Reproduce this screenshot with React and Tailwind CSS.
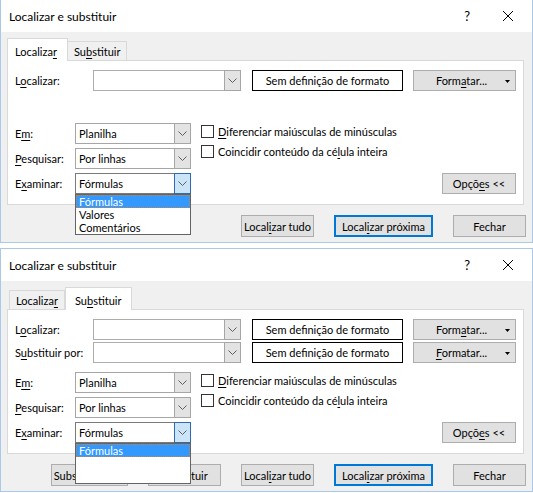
const ui = "font-['Lato',sans-serif] text-[11px] leading-[13px] text-black";

const U = ({ children }) => <span className="underline underline-offset-[2px]">{children}</span>;

const Chevron = () => (
  <svg width="9" height="5" viewBox="0 0 9 5" className="block">
    <polyline points="0.5,0.5 4.5,4.5 8.5,0.5" fill="none" stroke="#606060" strokeWidth="1" />
  </svg>
);

function Combo({ width, value, open, items, blankList, editable }) {
  return (
    <div className={`relative flex h-[21px] ${width} shrink-0`}>
      <div
        className={`flex flex-1 items-center border border-r-0 bg-white pl-[3px] ${
          open ? "border-[#7a7a7a]" : editable ? "border-[#adadad]" : "border-[#a6a6a6]"
        }`}
      >
        {value}
      </div>
      <div
        className={`flex w-[17px] items-center justify-center border ${
          open ? "border-[#2e6bb0] bg-[#cce4f7]" : "border-[#a6a6a6] bg-[#e3e3e3]"
        }`}
      >
        <Chevron />
      </div>
      {open && (
        <div className="absolute left-0 top-full z-20 flex h-[41px] w-full flex-col border border-[#646464] bg-white leading-[12px]">
          <div className="flex h-[13px] items-center border border-dotted border-[#c9843f] bg-[#3399ff] pl-[2px] text-white">
            {items[0]}
          </div>
          {!blankList &&
            items.slice(1).map((it) => (
              <div key={it} className="flex h-[13px] items-center pl-[3px]">
                {it}
              </div>
            ))}
        </div>
      )}
    </div>
  );
}

function Button({ width, children, primary }) {
  return (
    <div
      className={`flex h-[22px] ${width} shrink-0 items-center justify-center ${
        primary ? "border-2 border-[#0078d7]" : "border border-[#adadad]"
      } bg-[#e1e1e1]`}
    >
      <span className="whitespace-nowrap">{children}</span>
    </div>
  );
}

function FormatBox() {
  return (
    <div className="flex h-[21px] w-[151px] shrink-0 items-center justify-center border border-black bg-white">
      <span className="whitespace-nowrap">Sem definição de formato</span>
    </div>
  );
}

function FormatButton({ children }) {
  return (
    <div className="relative flex h-[21px] w-[103px] shrink-0 items-center justify-center border border-[#adadad] bg-[#e1e1e1] pr-[6px]">
      <span className="whitespace-nowrap">{children}</span>
      <svg width="5" height="3" viewBox="0 0 5 3" className="absolute right-[5px] top-[9px]">
        <polygon points="0,0 5,0 2.5,3" fill="#000" />
      </svg>
    </div>
  );
}

function Checkbox({ children }) {
  return (
    <div className="flex h-[13px] items-center">
      <div className="h-[13px] w-[13px] shrink-0 border border-[#333333] bg-white" />
      <span className="ml-[4px] whitespace-nowrap">{children}</span>
    </div>
  );
}

function Label({ width, children }) {
  return <span className={`${width} shrink-0 whitespace-nowrap`}>{children}</span>;
}

function Dialog({ replace }) {
  return (
    <div
      className={`flex w-[533px] flex-col border-x border-b border-[#a9c8ea] ${
        replace ? "mt-[5px] border-t" : ""
      }`}
    >
      {/* title bar */}
      <div className="flex h-[32px] items-center bg-white pl-[8px] text-[12px]">
        <span className="flex-1">Localizar e substituir</span>
        <span className="mr-[32px] text-[13px]">?</span>
        <svg width="12" height="12" viewBox="0 0 12 12" className="mr-[18px]">
          <path d="M1 1 L11 11 M11 1 L1 11" stroke="#000" strokeWidth="1" />
        </svg>
      </div>

      {/* body */}
      <div className="flex h-[210px] flex-col bg-[#f0f0f0]">
        {/* tabs */}
        <div className={`mt-[6px] flex h-[22px] items-end ${replace ? "pl-[8px]" : "pl-[6px]"}`}>
          {replace ? (
            <>
              <div className="flex h-[19px] w-[56px] items-center border-x border-t border-[#d9d9d9] pl-[6px]">
                <span className="whitespace-nowrap">
                  Localiza<U>r</U>
                </span>
              </div>
              <div className="relative z-10 -mb-px flex h-[23px] w-[67px] items-center border-x border-t border-[#d9d9d9] bg-white pl-[9px] pt-[3px]">
                <span className="whitespace-nowrap">
                  Su<U>b</U>stituir
                </span>
              </div>
            </>
          ) : (
            <>
              <div className="relative z-10 -mb-px flex h-[23px] w-[61px] items-center border-x border-t border-[#d9d9d9] bg-white pl-[7px] pt-[3px]">
                <span className="whitespace-nowrap">
                  Localiza<U>r</U>
                </span>
              </div>
              <div className="flex h-[19px] w-[59px] items-center border-r border-t border-[#d9d9d9] pl-[6px]">
                <span className="whitespace-nowrap">
                  Su<U>b</U>stituir
                </span>
              </div>
            </>
          )}
        </div>

        {/* panel */}
        <div className="ml-[6px] flex h-[145px] w-[517px] flex-col border border-[#d9d9d9] bg-white px-[7px] pt-[9px]">
          <div className="flex items-center">
            <Label width="w-[78px]">
              L<U>o</U>calizar:
            </Label>
            <Combo width="w-[148px]" editable />
            <div className="w-[11px]" />
            <FormatBox />
            <div className="w-[10px]" />
            <FormatButton>
              Form<U>a</U>tar...
            </FormatButton>
          </div>

          <div className={`mt-[2px] flex items-center ${replace ? "" : "invisible"}`}>
            <Label width="w-[78px]">
              S<U>u</U>bstituir por:
            </Label>
            <Combo width="w-[148px]" editable />
            <div className="w-[11px]" />
            <FormatBox />
            <div className="w-[10px]" />
            <FormatButton>
              <U>F</U>ormatar...
            </FormatButton>
          </div>

          <div className="mt-[9px] flex">
            <div className="flex flex-col gap-[4px]">
              <div className="flex items-center">
                <Label width="w-[60px]">
                  E<U>m</U>:
                </Label>
                <Combo width="w-[116px]" value="Planilha" />
              </div>
              <div className="flex items-center">
                <Label width="w-[60px]">
                  <U>P</U>esquisar:
                </Label>
                <Combo width="w-[116px]" value="Por linhas" />
              </div>
              <div className="flex items-center">
                <Label width="w-[60px]">
                  E<U>x</U>aminar:
                </Label>
                <Combo
                  width="w-[116px]"
                  value="Fórmulas"
                  open
                  blankList={replace}
                  items={["Fórmulas", "Valores", "Comentários"]}
                />
              </div>
            </div>

            <div className="ml-[10px] flex flex-1 flex-col gap-[7px] pt-[2px]">
              <Checkbox>
                <U>D</U>iferenciar maiúsculas de minúsculas
              </Checkbox>
              <Checkbox>
                Coincidir conteúdo da cé<U>l</U>ula inteira
              </Checkbox>
            </div>

            <div className="flex items-end">
              <div className="flex h-[21px] w-[74px] items-center justify-center border border-[#adadad] bg-[#e1e1e1]">
                <span className="whitespace-nowrap">
                  Opçõ<U>e</U>s &lt;&lt;
                </span>
              </div>
            </div>
          </div>
        </div>

        {/* buttons */}
        <div className="mt-[10px] flex justify-end gap-[20px] pr-[6px]">
          {replace && (
            <>
              <Button width="w-[77px]">
                Substituir <U>t</U>udo
              </Button>
              <Button width="w-[73px]">
                Su<U>b</U>stituir
              </Button>
            </>
          )}
          <Button width="w-[73px]">
            Local<U>i</U>zar tudo
          </Button>
          <Button width="w-[99px]" primary>
            Local<U>i</U>zar próxima
          </Button>
          <Button width="w-[73px]">Fechar</Button>
        </div>
      </div>
    </div>
  );
}

export default function App() {
  return (
    <div className={`h-[493px] w-[533px] overflow-hidden bg-white ${ui}`}>
      <Dialog />
      <Dialog replace />
    </div>
  );
}
